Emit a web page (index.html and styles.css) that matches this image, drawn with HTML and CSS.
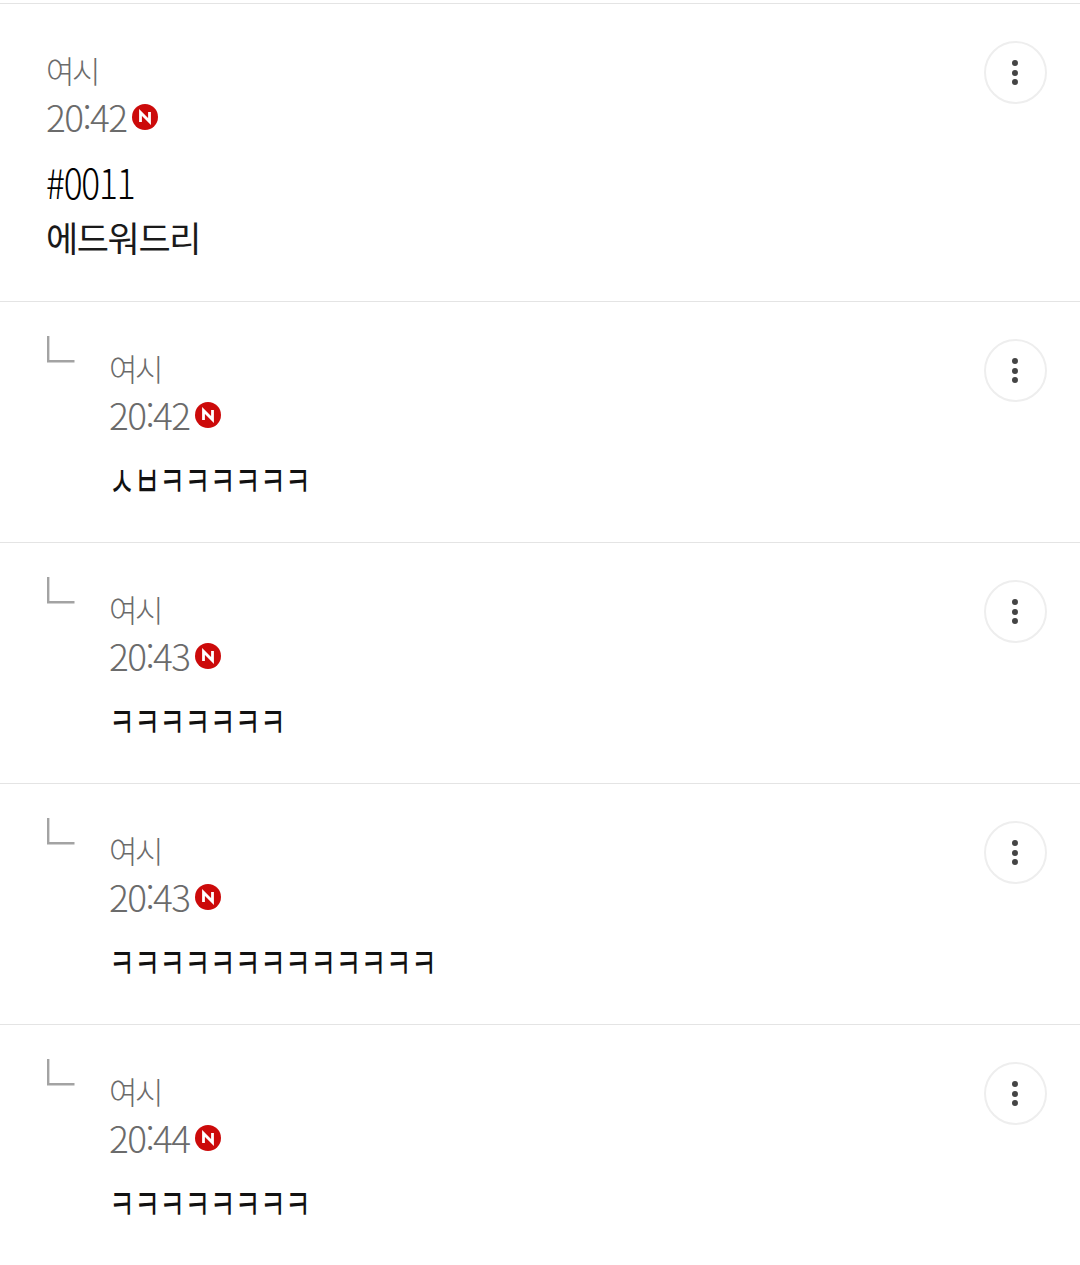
FILE: index.html
```html
<!DOCTYPE html>
<html lang="ko">

<head>
    <meta charset="UTF-8">
    <meta name="viewport" content="width=device-width, initial-scale=1.0">
    <title>댓글</title>
    <link rel="stylesheet" href="styles.css">
</head>

<body>
    <div class="comments">
        <div class="comment first">
            <div class="content">
                <div class="meta">여시</div>
                <div class="meta time">20:42
                    <svg class="new-badge" viewBox="0 0 26 26"><circle cx="13" cy="13" r="13" fill="#cc0a0a"/><path d="M8.5 18V8.5L17.5 17.5V8" fill="none" stroke="#fff" stroke-width="2.8"/></svg>
                </div>
                <div class="body"><span class="tag">#0011</span>에드워드리</div>
            </div>
            <button class="more" type="button"><span></span><span></span><span></span></button>
        </div>

        <div class="comment">
            <svg class="reply-mark" viewBox="0 0 28 27"><path d="M1.2 0V25.3H27.5" fill="none" stroke="#a3a3a3" stroke-width="2.4"/></svg>
            <div class="content">
                <div class="meta">여시</div>
                <div class="meta time">20:42
                    <svg class="new-badge" viewBox="0 0 26 26"><circle cx="13" cy="13" r="13" fill="#cc0a0a"/><path d="M8.5 18V8.5L17.5 17.5V8" fill="none" stroke="#fff" stroke-width="2.8"/></svg>
                </div>
                <div class="body"><span class="jamo">ㅅㅂㅋㅋㅋㅋㅋㅋ</span></div>
            </div>
            <button class="more" type="button"><span></span><span></span><span></span></button>
        </div>

        <div class="comment">
            <svg class="reply-mark" viewBox="0 0 28 27"><path d="M1.2 0V25.3H27.5" fill="none" stroke="#a3a3a3" stroke-width="2.4"/></svg>
            <div class="content">
                <div class="meta">여시</div>
                <div class="meta time">20:43
                    <svg class="new-badge" viewBox="0 0 26 26"><circle cx="13" cy="13" r="13" fill="#cc0a0a"/><path d="M8.5 18V8.5L17.5 17.5V8" fill="none" stroke="#fff" stroke-width="2.8"/></svg>
                </div>
                <div class="body"><span class="jamo">ㅋㅋㅋㅋㅋㅋㅋ</span></div>
            </div>
            <button class="more" type="button"><span></span><span></span><span></span></button>
        </div>

        <div class="comment">
            <svg class="reply-mark" viewBox="0 0 28 27"><path d="M1.2 0V25.3H27.5" fill="none" stroke="#a3a3a3" stroke-width="2.4"/></svg>
            <div class="content">
                <div class="meta">여시</div>
                <div class="meta time">20:43
                    <svg class="new-badge" viewBox="0 0 26 26"><circle cx="13" cy="13" r="13" fill="#cc0a0a"/><path d="M8.5 18V8.5L17.5 17.5V8" fill="none" stroke="#fff" stroke-width="2.8"/></svg>
                </div>
                <div class="body"><span class="jamo">ㅋㅋㅋㅋㅋㅋㅋㅋㅋㅋㅋㅋㅋ</span></div>
            </div>
            <button class="more" type="button"><span></span><span></span><span></span></button>
        </div>

        <div class="comment">
            <svg class="reply-mark" viewBox="0 0 28 27"><path d="M1.2 0V25.3H27.5" fill="none" stroke="#a3a3a3" stroke-width="2.4"/></svg>
            <div class="content">
                <div class="meta">여시</div>
                <div class="meta time">20:44
                    <svg class="new-badge" viewBox="0 0 26 26"><circle cx="13" cy="13" r="13" fill="#cc0a0a"/><path d="M8.5 18V8.5L17.5 17.5V8" fill="none" stroke="#fff" stroke-width="2.8"/></svg>
                </div>
                <div class="body"><span class="jamo">ㅋㅋㅋㅋㅋㅋㅋㅋ</span></div>
            </div>
            <button class="more" type="button"><span></span><span></span><span></span></button>
        </div>
    </div>
</body>

</html>
```

FILE: styles.css
```css
body {
    font-family: "Noto Sans CJK KR", "Noto Sans", sans-serif;
    background-color: white;
    margin: 0;
}

.comments {
    margin-top: 3px;
    border-top: 1px solid #e4e4e4;
}

.comment {
    display: flex;
    align-items: flex-start;
    padding: 37px 33px 35px 46px;
    border-bottom: 1px solid #e4e4e4;
}

.comment.first {
    padding-bottom: 37px;
}

.comment:last-child {
    border-bottom: none;
}

.reply-mark {
    width: 28px;
    height: 27px;
    flex-shrink: 0;
    margin: -3px 34px 0 1px;
}

.content {
    flex: 1;
    padding-top: 5px;
}

.meta {
    height: 48px;
    line-height: 48px;
    font-size: 31px;
    font-weight: 300;
    color: #6b6b6b;
    letter-spacing: -2.4px;
}

.time {
    display: flex;
    align-items: center;
    gap: 6px;
    margin-top: -2px;
    font-size: 37px;
    letter-spacing: -1.6px;
}

.new-badge {
    width: 26px;
    height: 26px;
    margin-top: 1px;
}

.body {
    margin-top: 14px;
    font-size: 35px;
    font-weight: 400;
    line-height: 55px;
    color: #1a1a1a;
    letter-spacing: -1.4px;
}

/* tall narrow digits, closest we get is squeezing a bigger size */
.tag {
    display: block;
    font-size: 41px;
    font-weight: 300;
    color: #000;
    transform: scaleX(0.86);
    transform-origin: left;
}

/* the bare consonants come out flat in this font, so stretch them */
.jamo {
    display: block;
    font-size: 28px;
    letter-spacing: -0.6px;
    color: #111;
    transform: scaleY(1.55);
}

.more {
    display: flex;
    flex-direction: column;
    align-items: center;
    justify-content: center;
    gap: 3.5px;
    width: 63px;
    height: 63px;
    padding: 0 1px 0 0;
    background-color: white;
    border: 2px solid #eeeeee;
    border-radius: 50%;
}

.more span {
    width: 6px;
    height: 6px;
    background-color: #444;
    border-radius: 50%;
}
```
